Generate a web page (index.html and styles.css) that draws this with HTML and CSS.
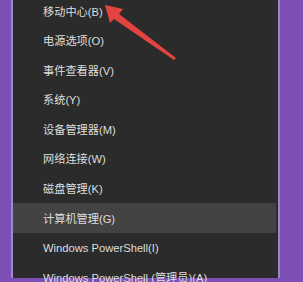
FILE: index.html
```html
<!DOCTYPE html>
<html lang="zh-CN">
<head>
  <meta charset="UTF-8">
  <meta name="viewport" content="width=device-width, initial-scale=1.0">
  <title>WinX 菜单</title>
  <link rel="stylesheet" href="styles.css">
</head>
<body>
  <div class="desk">
    <ul class="menu">
      <li>移动中心(B)</li>
      <li>电源选项(O)</li>
      <li>事件查看器(V)</li>
      <li>系统(Y)</li>
      <li>设备管理器(M)</li>
      <li>网络连接(W)</li>
      <li>磁盘管理(K)</li>
      <li class="hover">计算机管理(G)</li>
      <li>Windows PowerShell(I)</li>
      <li>Windows PowerShell (管理员)(A)</li>
    </ul>

    <svg class="arrow" width="303" height="282" viewBox="0 0 303 282">
      <polygon points="105,9 123,13 119,18 176,62 174,64 114,23 110,27" fill="#e4443f"/>
    </svg>
  </div>
</body>
</html>
```

FILE: styles.css
```css
*, *::before, *::after {
  box-sizing: border-box;
}

html, body {
  margin: 0;
  height: 100%;
  overflow: hidden;
}

body {
  background: #7b4fb3;
  font-family: "Liberation Sans", "Noto Sans CJK SC", sans-serif;
}

.desk {
  position: relative;
  height: 100%;
}

.menu {
  list-style: none;
  margin: 0 0 0 11px;
  padding: 0 2px 0 0;
  width: 269px;
  height: 100%;
  background: #2b2b2b;
  border-left: 2px solid #a08ac4;
  border-right: 2px solid #9d87c2;
}

.menu li {
  height: 29.6px;
  line-height: 28px;
  padding: 1.5px 0 0 30px;
  color: #dedede;
  font-size: 11.2px;
  white-space: nowrap;
}

.menu li:first-child {
  margin-top: -4px;
}

.menu li.hover {
  background: #434343;
}

.arrow {
  position: absolute;
  left: 0;
  top: 0;
}
```
